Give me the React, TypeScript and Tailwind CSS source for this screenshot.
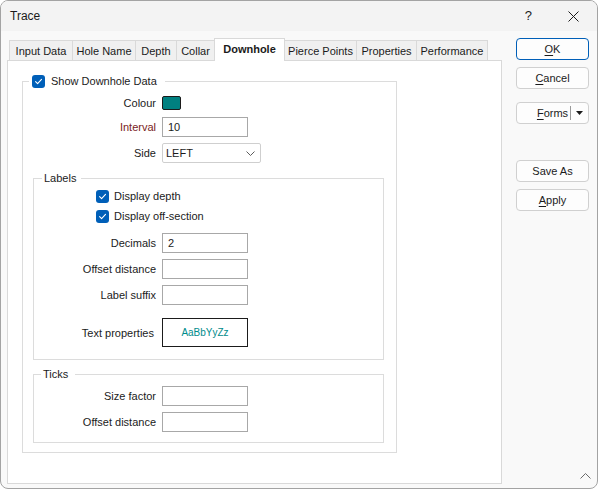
import React from 'react';

/* ------------------------------------------------------------------ */
/*  Small pieces                                                       */
/* ------------------------------------------------------------------ */

const TABS: { label: string; w: string; active?: boolean }[] = [
  { label: 'Input Data', w: 'w-[64px]' },
  { label: 'Hole Name', w: 'w-[64px]' },
  { label: 'Depth', w: 'w-[42px]' },
  { label: 'Collar', w: 'w-[39px]' },
  { label: 'Downhole', w: 'w-[71px]', active: true },
  { label: 'Pierce Points', w: 'w-[73px]' },
  { label: 'Properties', w: 'w-[61px]' },
  { label: 'Performance', w: 'w-[72px]' },
];

function CheckBox() {
  return (
    <span className="flex h-[13px] w-[13px] shrink-0 items-center justify-center rounded-[3px] bg-[#005fb8]">
      <svg width="9" height="9" viewBox="0 0 9 9" fill="none">
        <path d="M1.6 4.7 L3.6 6.6 L7.5 2.4" stroke="#ffffff" strokeWidth="1.1" strokeLinecap="round" strokeLinejoin="round" />
      </svg>
    </span>
  );
}

function TextBox({ value = '', w = 'w-[86px]' }: { value?: string; w?: string }) {
  return (
    <div className={`flex h-[20px] ${w} items-center border border-[#a8a8a8] bg-white pl-[5px] text-[#1b1b1b]`}>
      {value}
    </div>
  );
}

function Row({
  label,
  labelW,
  className = '',
  labelClass = 'text-[#1b1b1b]',
  children,
}: {
  label: string;
  labelW: string;
  className?: string;
  labelClass?: string;
  children: React.ReactNode;
}) {
  return (
    <div className={`flex items-center ${className}`}>
      <span className={`${labelW} shrink-0 text-right ${labelClass}`}>{label}</span>
      <div className="ml-[6px]">{children}</div>
    </div>
  );
}

function Button({ children, className = '', primary = false }: { children: React.ReactNode; className?: string; primary?: boolean }) {
  return (
    <div
      className={`flex h-[22px] w-[73px] items-center justify-center rounded-[4px] border bg-[#fdfdfd] text-[#1b1b1b] ${
        primary ? 'border-[#005fb8]' : 'border-[#d0d0d0]'
      } ${className}`}
    >
      {children}
    </div>
  );
}

/* ------------------------------------------------------------------ */
/*  Dialog                                                             */
/* ------------------------------------------------------------------ */

export default function App() {
  return (
    <div className="flex h-[489px] w-[598px] flex-col overflow-hidden rounded-[8px] border border-[#a3a3a3] bg-[#f9f9f9] font-['Liberation_Sans',Arial,sans-serif] text-[11px] leading-[16px] text-[#1b1b1b]">
      {/* Title bar */}
      <div className="flex h-[30px] shrink-0 items-center bg-[#f3f3f3] pl-[9px]">
        <span className="text-[12px]">Trace</span>
        <span className="ml-auto text-[13px] text-[#1b1b1b]">?</span>
        <svg className="ml-[36px] mr-[18px]" width="11" height="11" viewBox="0 0 11 11" fill="none">
          <path d="M0.5 0.5 L10.5 10.5 M10.5 0.5 L0.5 10.5" stroke="#1b1b1b" strokeWidth="1" />
        </svg>
      </div>

      {/* Body */}
      <div className="flex flex-1">
        {/* Left column: tabs + page */}
        <div className="flex flex-col pl-[6px] pt-[7px]">
          <div className="ml-[2px] flex h-[22px] items-end">
            {TABS.map((t, i) =>
              t.active ? (
                <div
                  key={t.label}
                  className={`relative z-10 -mb-px -ml-px flex h-[23px] ${t.w} items-center justify-center border-x border-t border-[#d9d9d9] bg-white pb-[2px] font-bold`}
                >
                  {t.label}
                </div>
              ) : (
                <div
                  key={t.label}
                  className={`flex h-[20px] ${t.w} items-center justify-center border-x border-t border-[#d9d9d9] bg-[#f0f0f0] ${
                    i > 0 ? '-ml-px' : ''
                  }`}
                >
                  {t.label}
                </div>
              ),
            )}
          </div>

          {/* Tab page */}
          <div className="h-[424px] w-[495px] border border-[#d9d9d9] bg-white pl-[14px] pt-[12px]">
            <fieldset className="w-[375px] border border-[#dcdcdc] pb-[9px]">
              <legend className="ml-[6px] flex h-[16px] items-center pl-[3px] pr-[8px]">
                <CheckBox />
                <span className="ml-[6px]">Show Downhole Data</span>
              </legend>

              <Row label="Colour" labelW="w-[133px]" className="mt-[4px] h-[20px]">
                <div className="h-[14px] w-[19px] rounded-[2px] border border-[#1b1b1b] bg-[#008080]" />
              </Row>
              <Row label="Interval" labelW="w-[133px]" className="mt-[4px]" labelClass="text-[#7a1c1c]">
                <TextBox value="10" />
              </Row>
              <Row label="Side" labelW="w-[133px]" className="mt-[6px]">
                <div className="flex h-[20px] w-[99px] items-center justify-between rounded-[2px] border border-[#cfcfcf] bg-white pl-[3px] pr-[5px]">
                  <span>LEFT</span>
                  <svg width="9" height="5" viewBox="0 0 9 5" fill="none">
                    <path d="M0.5 0.5 L4.5 4.5 L8.5 0.5" stroke="#5c5c5c" strokeWidth="1" />
                  </svg>
                </div>
              </Row>

              {/* Labels */}
              <fieldset className="ml-[10px] mt-[7px] w-[351px] border border-[#dcdcdc] pb-[12px]">
                <legend className="ml-[8px] px-[2px] pr-[5px]">Labels</legend>
                <div className="flex h-[20px] items-center pl-[62px]">
                  <CheckBox />
                  <span className="ml-[5px]">Display depth</span>
                </div>
                <div className="flex h-[20px] items-center pl-[62px]">
                  <CheckBox />
                  <span className="ml-[5px]">Display off-section</span>
                </div>
                <Row label="Decimals" labelW="w-[122px]" className="mt-[7px]">
                  <TextBox value="2" />
                </Row>
                <Row label="Offset distance" labelW="w-[122px]" className="mt-[6px]">
                  <TextBox />
                </Row>
                <Row label="Label suffix" labelW="w-[122px]" className="mt-[6px]">
                  <TextBox />
                </Row>
                <Row label="Text properties" labelW="w-[120px]" className="mt-[13px]">
                  <div className="ml-[2px] flex h-[29px] w-[86px] items-center justify-center border border-[#1b1b1b] bg-white text-[10px] text-[#008b8b]">
                    AaBbYyZz
                  </div>
                </Row>
              </fieldset>

              {/* Ticks */}
              <fieldset className="ml-[10px] mt-[6px] w-[351px] border border-[#dcdcdc] pb-[10px]">
                <legend className="ml-[7px] px-[2px] pr-[7px]">Ticks</legend>
                <Row label="Size factor" labelW="w-[122px]" className="mt-[4px]">
                  <TextBox />
                </Row>
                <Row label="Offset distance" labelW="w-[122px]" className="mt-[6px]">
                  <TextBox />
                </Row>
              </fieldset>
            </fieldset>
          </div>
        </div>

        {/* Right column: buttons */}
        <div className="ml-[14px] flex flex-1 flex-col pt-[7px]">
          <Button primary>
            <span className="underline underline-offset-2">O</span>K
          </Button>
          <Button className="mt-[7px]">
            <span className="underline underline-offset-2">C</span>ancel
          </Button>
          <div className="mt-[13px] flex h-[22px] w-[73px] items-center rounded-[4px] border border-[#d0d0d0] bg-[#fdfdfd]">
            <span className="flex-1 pl-[18px] text-center">
              <span className="underline underline-offset-2">F</span>orms
            </span>
            <span className="h-[14px] w-px bg-[#9a9a9a]" />
            <svg className="mx-[5px]" width="7" height="4" viewBox="0 0 7 4">
              <path d="M0 0 L7 0 L3.5 4 Z" fill="#1b1b1b" />
            </svg>
          </div>
          <Button className="mt-[36px]">Save As</Button>
          <Button className="mt-[7px]">
            <span className="underline underline-offset-2">A</span>pply
          </Button>

          <svg className="mb-[9px] ml-[64px] mt-auto" width="11" height="6" viewBox="0 0 11 6" fill="none">
            <path d="M0.5 5.5 L5.5 0.5 L10.5 5.5" stroke="#6b6b6b" strokeWidth="1" />
          </svg>
        </div>
      </div>
    </div>
  );
}
